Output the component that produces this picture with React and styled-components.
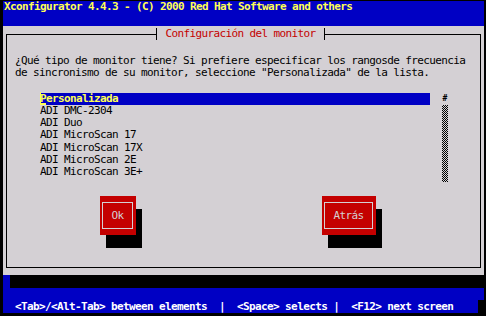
import React from 'react';
import styled, { createGlobalStyle } from 'styled-components';

const BLUE = '#0000c4';
const GREY = '#d4d0d4';
const RED = '#c40000';
const YELLOW = '#ffff54';
const BLACK = '#000000';
const MONO = '"DejaVu Sans Mono", "Liberation Mono", monospace';

const Global = createGlobalStyle`
  html, body { margin: 0; padding: 0; background: ${BLACK}; }
`;

const Screen = styled.div`
  width: 486px;
  height: 316px;
  box-sizing: border-box;
  padding: 1px 2px 3px 3px;
  background: ${BLACK};
  display: flex;
  flex-direction: column;
  font-family: ${MONO};
  font-size: 11px;
  letter-spacing: -0.62px;
  line-height: 12.3px;
`;

const TitleBar = styled.div`
  flex: none;
  height: 25px;
  background: ${BLUE};
  color: ${YELLOW};
  font-weight: bold;
  padding-left: 1px;
  white-space: pre;
`;

const Window = styled.div`
  flex: none;
  height: 249px;
  box-sizing: border-box;
  background: ${GREY};
  padding: 8px 3px 7px 3px;
  display: flex;
`;

const Frame = styled.div`
  flex: 1;
  position: relative;
  border: 1px solid ${BLACK};
  padding: 20px 0 0 8px;
  display: flex;
  flex-direction: column;
`;

const Legend = styled.div`
  position: absolute;
  top: -7px;
  left: 149px;
  width: 169px;
  height: 12px;
  box-sizing: border-box;
  border-left: 1px solid ${BLACK};
  border-right: 1px solid ${BLACK};
  background: ${GREY};
  color: ${RED};
  text-align: center;
  line-height: 12px;
  white-space: pre;
`;

const Prompt = styled.div`
  color: ${BLACK};
  white-space: pre;
`;

const ListArea = styled.div`
  display: flex;
  margin-top: 13px;
  margin-left: 25px;
`;

const List = styled.div`
  width: 390px;
  display: flex;
  flex-direction: column;
`;

const Item = styled.div`
  height: 12.3px;
  white-space: pre;
  color: ${p => (p.$selected ? YELLOW : BLACK)};
  background: ${p => (p.$selected ? BLUE : 'transparent')};
  font-weight: ${p => (p.$selected ? 'bold' : 'normal')};
`;

const Cursor = styled.span`
  box-shadow: inset 1px 0 0 ${YELLOW}, inset 0 -2px 0 ${YELLOW};
`;

const Scrollbar = styled.div`
  margin-left: 12px;
  width: 6px;
  display: flex;
  flex-direction: column;
`;

const Thumb = styled.div`
  height: 12.3px;
  font-size: 8px;
  font-weight: bold;
  letter-spacing: 0;
  line-height: 12.3px;
  text-align: center;
  color: ${BLACK};
`;

const Track = styled.div`
  height: 77.6px;
  background: repeating-conic-gradient(${BLACK} 0 25%, ${GREY} 0 50%) 0 0 / 2px 2px;
`;

const ButtonRow = styled.div`
  display: flex;
  margin-top: 14px;
  margin-left: 85px;
  gap: 186px;
`;

const Button = styled.div`
  width: ${p => p.$w}px;
  height: 39px;
  box-sizing: border-box;
  padding: 6px 3px 6px 2px;
  background: ${RED};
  box-shadow: 6px 13px 0 ${BLACK};
  display: flex;
`;

const ButtonFace = styled.div`
  flex: 1;
  border: 1px solid ${GREY};
  color: ${GREY};
  display: flex;
  align-items: center;
  justify-content: center;
  white-space: pre;
`;

const ShadowRow = styled.div`
  flex: none;
  height: 13px;
  display: flex;
`;

const ShadowLead = styled.div`
  width: 7px;
  background: ${BLUE};
`;

const BlueRow = styled.div`
  flex: none;
  height: 12px;
  background: ${BLUE};
`;

const HelpBar = styled.div`
  flex: none;
  height: 13px;
  margin-right: 6px;
  background: ${BLUE};
  color: #ffffff;
  font-weight: bold;
  line-height: 13px;
  white-space: pre;
`;

const monitors = [
  'ADI DMC-2304',
  'ADI Duo',
  'ADI MicroScan 17',
  'ADI MicroScan 17X',
  'ADI MicroScan 2E',
  'ADI MicroScan 3E+',
];

export default function App() {
  return (
    <>
      <Global />
      <Screen>
        <TitleBar>Xconfigurator 4.4.3 - (C) 2000 Red Hat Software and others</TitleBar>
        <Window>
          <Frame>
            <Legend> Configuración del monitor </Legend>
            <Prompt>¿Qué tipo de monitor tiene? Si prefiere especificar los rangosde frecuencia</Prompt>
            <Prompt>de sincronismo de su monitor, seleccione "Personalizada" de la lista.</Prompt>
            <ListArea>
              <List>
                <Item $selected>
                  <Cursor>P</Cursor>ersonalizada
                </Item>
                {monitors.map(m => (
                  <Item key={m}>{m}</Item>
                ))}
              </List>
              <Scrollbar>
                <Thumb>#</Thumb>
                <Track />
              </Scrollbar>
            </ListArea>
            <ButtonRow>
              <Button $w={36}>
                <ButtonFace>Ok</ButtonFace>
              </Button>
              <Button $w={54}>
                <ButtonFace>Atrás</ButtonFace>
              </Button>
            </ButtonRow>
          </Frame>
        </Window>
        <ShadowRow>
          <ShadowLead />
        </ShadowRow>
        <BlueRow />
        <HelpBar>{'  <Tab>/<Alt-Tab> between elements  |  <Space> selects |  <F12> next screen'}</HelpBar>
      </Screen>
    </>
  );
}
